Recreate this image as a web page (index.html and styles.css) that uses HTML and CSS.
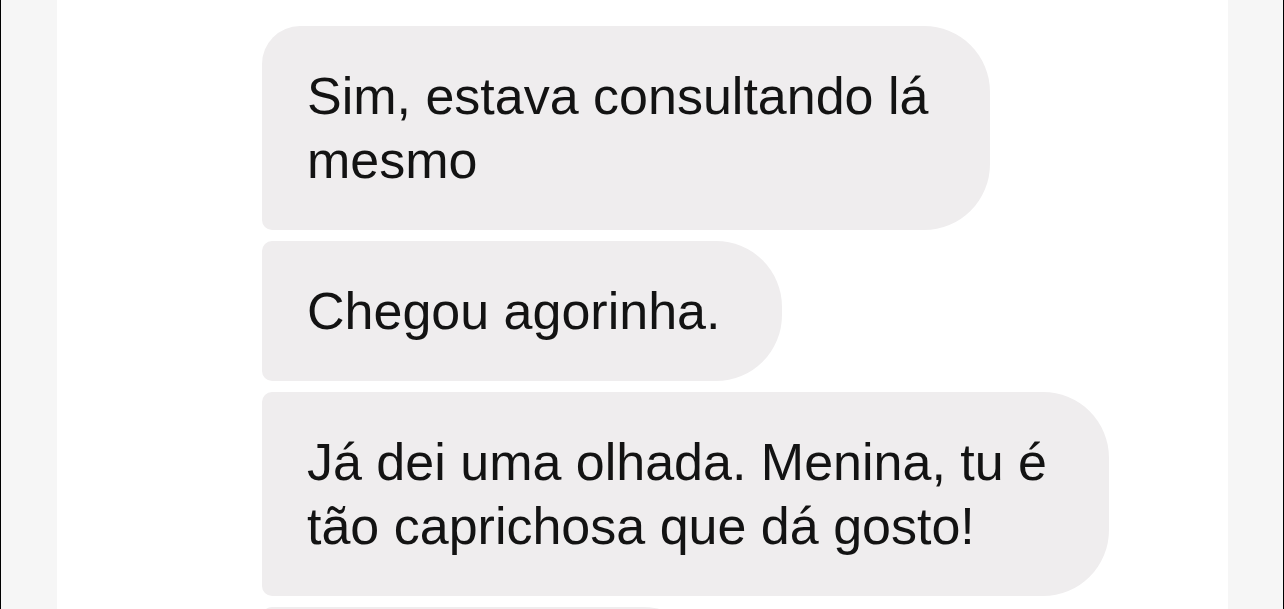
FILE: index.html
```html
<!DOCTYPE html>
<html lang="pt-BR">

<head>
  <meta charset="UTF-8">
  <title>Conversa</title>
  <link rel="stylesheet" href="styles.css">
</head>

<body>
  <div class="screen">
    <div class="rail rail-left"></div>

    <div class="thread">
      <div class="bubble bubble-first">Sim, estava consultando lá<br>mesmo</div>
      <div class="bubble">Chegou agorinha.</div>
      <div class="bubble">Já dei uma olhada. Menina, tu é<br>tão caprichosa que dá gosto!</div>
      <!-- próxima mensagem, só a borda aparece -->
      <div class="bubble bubble-peek"></div>
    </div>

    <div class="rail rail-right"></div>
  </div>
</body>

</html>
```

FILE: styles.css
```css
html,
body {
  margin: 0;
  height: 100%;
  overflow: hidden;
}

body {
  font-family: 'Liberation Sans', Arial, sans-serif;
  background: #fff;
  color: #131313;
}

.screen {
  display: flex;
  height: 100vh;
}

.rail {
  background: #f6f6f6;
}

.rail-left {
  width: 56px;
  border-left: 1px solid #000;
}

.rail-right {
  width: 55px;
  border-right: 1px solid #000;
}

.thread {
  flex: 1;
  background: #fff;
  padding: 26px 0 0 205px;
  display: flex;
  flex-direction: column;
  align-items: flex-start;
  gap: 11px;
}

.bubble {
  background: #efedee;
  font-size: 52px;
  line-height: 64px;
  padding: 38px 62px 38px 45px;
  border-radius: 10px 66px 66px 10px;
  white-space: nowrap;
  flex-shrink: 0;
}

.bubble-first {
  border-top-left-radius: 38px;
}

.bubble-peek {
  width: 340px;
  height: 64px;
}
```
